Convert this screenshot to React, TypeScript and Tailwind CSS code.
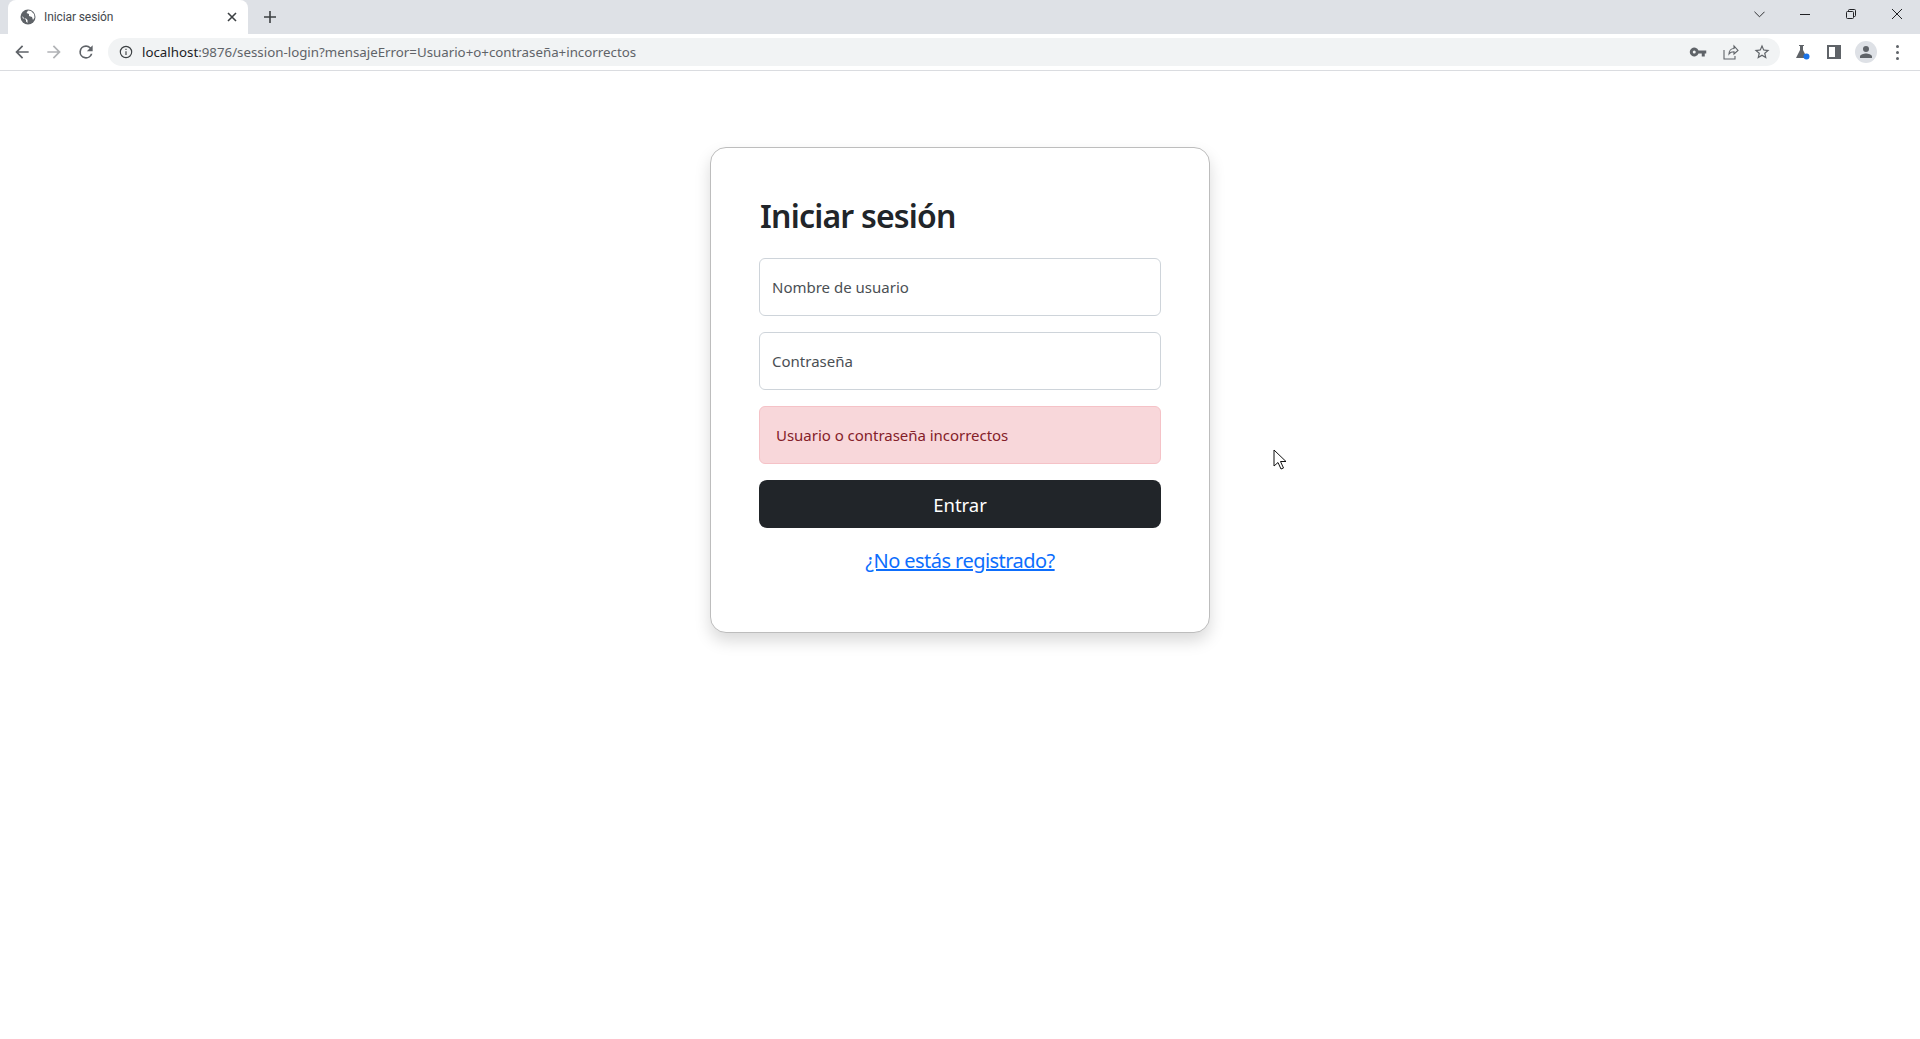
import React from 'react';

const uiFont = "font-['Noto_Sans','Open_Sans',sans-serif]";

function ToolbarIcon({ children, className = 'w-[20px] h-[20px]', fill = '#5f6368' }: { children: React.ReactNode; className?: string; fill?: string }) {
  return (
    <svg viewBox="0 0 24 24" className={className} fill={fill}>
      {children}
    </svg>
  );
}

function TabStrip() {
  return (
    <div className="h-[34px] bg-[#dee1e6] flex items-end pl-[8px]">
      <div className="w-[240px] h-[34px] bg-white rounded-t-[8px] flex items-center pl-[12px] pr-[11px]">
        <svg viewBox="0 0 16 16" className="w-[16px] h-[16px] shrink-0">
          <circle cx="8" cy="8" r="7.500" fill="#5f6368" />
          <path d="M2 7l4 4v1.500l1.500 1.500v-3L6 9.500H3zM8 1.500L6.500 4 9 5v2l3 1 1 3 1.500-2.500L14 5l-3-3z" fill="#ffffff" />
        </svg>
        <span className="ml-[8px] text-[12px] text-[#45494e] flex-1 font-['Roboto',sans-serif] tracking-[-0.1px]">Iniciar sesión</span>
        <svg viewBox="0 0 10 10" className="w-[10px] h-[10px]" stroke="#3c4043" strokeWidth="1.600" fill="none">
          <path d="M1 1l8 8M9 1l-8 8" />
        </svg>
      </div>
      <div className="h-[34px] flex items-center ml-[16px]">
        <svg viewBox="0 0 12 12" className="w-[12px] h-[12px]" stroke="#3c4043" strokeWidth="1.600" fill="none">
          <path d="M6 0v12M0 6h12" />
        </svg>
      </div>
      <div className="flex-1" />
      <div className="flex h-[28px] self-start">
        <div className="w-[46px] flex items-center justify-center">
          <svg viewBox="0 0 12 7" className="w-[11px] h-[7px]" stroke="#202124" strokeWidth="1" fill="none">
            <path d="M0.500 0.500L6 6l5.500-5.500" />
          </svg>
        </div>
        <div className="w-[46px] flex items-center justify-center">
          <div className="w-[10px] h-px bg-[#202124]" />
        </div>
        <div className="w-[46px] flex items-center justify-center">
          <svg viewBox="0 0 10 10" className="w-[10px] h-[10px]" stroke="#202124" strokeWidth="1" fill="none">
            <rect x="0.500" y="2.500" width="7" height="7" rx="1" />
            <path d="M2.500 2.500V1.500a1 1 0 0 1 1-1h5a1 1 0 0 1 1 1v5a1 1 0 0 1-1 1h-1" />
          </svg>
        </div>
        <div className="w-[46px] flex items-center justify-center">
          <svg viewBox="0 0 10 10" className="w-[10px] h-[10px]" stroke="#202124" strokeWidth="1" fill="none">
            <path d="M0 0l10 10M10 0L0 10" />
          </svg>
        </div>
      </div>
    </div>
  );
}

function Toolbar() {
  return (
    <div className="h-[37px] bg-white border-b border-[#dadce0] flex items-center">
      <div className="w-[108px] pl-[12px] flex items-center gap-[12px] shrink-0">
        <ToolbarIcon>
          <path d="M20 11H7.830l5.590-5.590L12 4l-8 8 8 8 1.410-1.410L7.830 13H20z" />
        </ToolbarIcon>
        <ToolbarIcon fill="#b1b3b6">
          <path d="M4 11h12.170l-5.590-5.590L12 4l8 8-8 8-1.410-1.410L16.170 13H4z" />
        </ToolbarIcon>
        <ToolbarIcon>
          <path d="M17.650 6.350A7.960 7.960 0 0 0 12 4a8 8 0 1 0 7.730 10h-2.080A6 6 0 1 1 12 6c1.660 0 3.140.690 4.220 1.780L13 11h7V4z" />
        </ToolbarIcon>
      </div>
      <div className="w-[1672px] h-[28px] rounded-full bg-[#f1f3f4] flex items-center shrink-0 pl-[11px] pr-[9px]">
        <svg viewBox="0 0 16 16" className="w-[14px] h-[14px] shrink-0" fill="none" stroke="#3c4043" strokeWidth="1.300">
          <circle cx="8" cy="8" r="6.500" />
          <path d="M8 7v4.500M8 4.200v1.400" />
        </svg>
        <span className="ml-[9px] pt-[1px] text-[13.300px] text-[#5f6368] flex-1">
          <span className="text-[#202124]">localhost</span>:9876/session-login?mensajeError=Usuario+o+contraseña+incorrectos
        </span>
        <div className="flex items-center">
          <ToolbarIcon className="w-[18px] h-[18px] mr-[16px]">
            <path d="M12.650 10A6 6 0 1 0 12.650 14H17v4h4v-4h2v-4H12.650zM7 14a2 2 0 1 1 0-4 2 2 0 0 1 0 4z" />
          </ToolbarIcon>
          <svg viewBox="0 0 16 16" className="w-[16px] h-[16px] mr-[14px]" fill="none" stroke="#5f6368" strokeWidth="1.100">
            <path d="M1 6v9h11v-3M6 10c0-3 2-5.500 5-5.500V2l4 4.500L11 10V7.800c-2 0-4 .700-5 2.200z" />
          </svg>
          <ToolbarIcon className="w-[18px] h-[18px]">
            <path d="M22 9.240l-7.190-.620L12 2 9.190 8.630 2 9.240l5.460 4.730L5.820 21 12 17.270 18.180 21l-1.630-7.030L22 9.240zM12 15.400l-3.760 2.270 1-4.280-3.320-2.880 4.380-.380L12 6.100l1.710 4.040 4.380.380-3.320 2.880 1 4.280L12 15.400z" />
          </ToolbarIcon>
        </div>
      </div>
    </div>
  );
}

function Cursor() {
  return (
    <svg viewBox="0 0 15 22" className="absolute left-[1273px] top-[449px] w-[15px] h-[22px]" fill="white" stroke="#111" strokeWidth="1">
      <path d="M1 1v16l4-3.500 3 6.500 2.500-1-3-6.500h5.500z" />
    </svg>
  );
}

function ExtensionIcons() {
  return (
    <div className="absolute left-[1794px] top-[40px] flex items-center h-[24px]">
      <svg viewBox="0 0 16 16" className="w-[16px] h-[16px] mr-[17px]">
        <path d="M5 1h5v1H9v4l4 8H2l4-8V2H5z" fill="#5f6368" />
        <circle cx="12.500" cy="12.500" r="3" fill="#1a73e8" />
      </svg>
      <div className="w-[14px] h-[14px] border-[2px] border-r-[6px] border-[#5f6368] mr-[14px]" />
      <div className="w-[22px] h-[22px] rounded-full bg-[#dee1e6] flex items-center justify-center mr-[19px]">
        <svg viewBox="0 0 24 24" className="w-[18px] h-[18px]" fill="#5f6368">
          <path d="M12 12a4 4 0 1 0 0-8 4 4 0 0 0 0 8zm0 2c-2.700 0-8 1.300-8 4v2h16v-2c0-2.700-5.300-4-8-4z" />
        </svg>
      </div>
      <div className="flex flex-col gap-[3px]">
        <div className="w-[3px] h-[3px] rounded-full bg-[#5f6368]" />
        <div className="w-[3px] h-[3px] rounded-full bg-[#5f6368]" />
        <div className="w-[3px] h-[3px] rounded-full bg-[#5f6368]" />
      </div>
    </div>
  );
}

export default function App() {
  return (
    <div className={`relative h-screen bg-white overflow-hidden ${uiFont}`}>
      <TabStrip />
      <Toolbar />
      <ExtensionIcons />
      <main className="flex justify-center pt-[76px]">
        <div className="w-[500px] h-[486px] bg-white border border-[#bdbdbd] rounded-[16px] shadow-[0_8px_16px_rgba(0,0,0,0.15)] p-[48px]">
          <h1 className="text-[32px] leading-[40px] tracking-[-0.8px] pl-[1px] font-semibold text-[#212529] mb-[22px]">Iniciar sesión</h1>
          <div className="flex flex-col gap-[16px]">
            <input
              placeholder="Nombre de usuario"
              className="h-[58px] w-full border border-[#ced4da] rounded-[6px] px-[12px] text-[15px] placeholder:text-[#4a4f54] outline-none"
            />
            <input
              placeholder="Contraseña"
              className="h-[58px] w-full border border-[#ced4da] rounded-[6px] px-[12px] text-[15px] placeholder:text-[#4a4f54] outline-none"
            />
            <div className="h-[58px] flex items-center border border-[#f5c2c7] bg-[#f8d7da] rounded-[6px] px-[16px] text-[15px] tracking-[-0.03px] text-[#842029]">
              Usuario o contraseña incorrectos
            </div>
            <button className="h-[48px] pt-[2px] bg-[#212529] text-white text-[18.500px] rounded-[8px]">Entrar</button>
          </div>
          <div className="text-center mt-[18px] text-[20px] leading-[30px] tracking-[-0.55px]">
            <a href="#" className="text-[#0d6efd] underline">¿No estás registrado?</a>
          </div>
        </div>
      </main>
      <Cursor />
    </div>
  );
}
